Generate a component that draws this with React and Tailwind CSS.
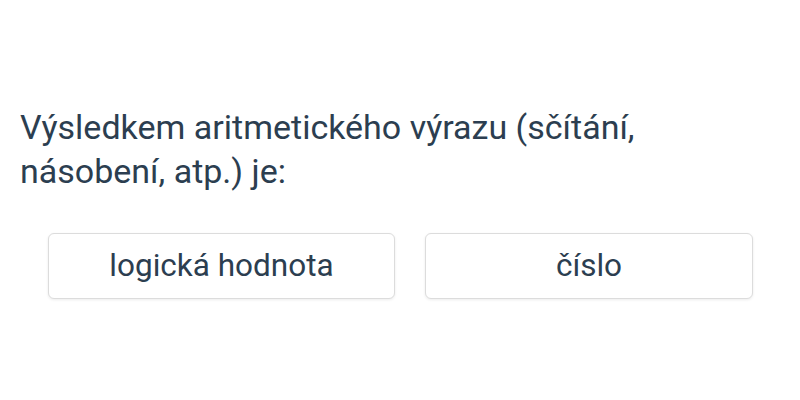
export default function App() {
  const answers = [
    { text: "logická hodnota", width: "w-[347px]" },
    { text: "číslo", width: "w-[328px]" },
  ];

  return (
    <div className="w-[800px] h-[400px] bg-white text-[#2c3e50] font-['Roboto',sans-serif]">
      <div className="pt-[105px] pl-5 pr-5">
        <p className="text-[34px] leading-[44px]">
          Výsledkem aritmetického výrazu (sčítání,
          <br />
          násobení, atp.) je:
        </p>
      </div>

      <div className="flex gap-[30px] pl-[48px] mt-[40px]">
        {answers.map((answer) => (
          <button
            key={answer.text}
            className={`${answer.width} h-[66px] bg-white border border-[#dcdcdc] rounded-md shadow-[0_1px_3px_rgba(0,0,0,0.08)] text-[31.5px] text-[#2c3e50]`}
          >
            {answer.text}
          </button>
        ))}
      </div>
    </div>
  );
}
